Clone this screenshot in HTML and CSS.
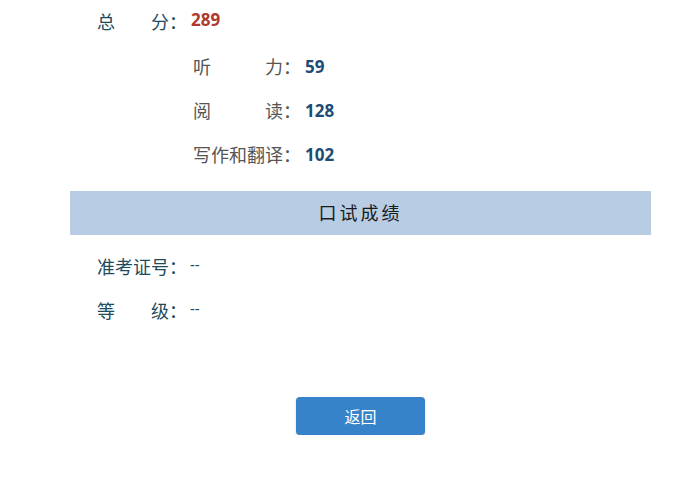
FILE: index.html
```html
<!DOCTYPE html>
<html lang="zh-CN">
<head>
  <meta charset="UTF-8">
  <meta name="viewport" content="width=device-width, initial-scale=1.0">
  <title>成绩查询</title>
  <link rel="stylesheet" href="styles.css">
</head>
<body>

<div id="result">
  <div class="row total">
    <span class="label">总分</span><span class="colon">：</span>
    <span class="value red">289</span>
  </div>
  <div class="row sub">
    <span class="label">听力</span><span class="colon">：</span>
    <span class="value">59</span>
  </div>
  <div class="row sub">
    <span class="label">阅读</span><span class="colon">：</span>
    <span class="value">128</span>
  </div>
  <div class="row sub">
    <span class="label">写作和翻译</span><span class="colon">：</span>
    <span class="value">102</span>
  </div>

  <div class="banner">口试成绩</div>

  <div class="row">
    <span class="label">准考证号</span><span class="colon">：</span>
    <span class="value plain">--</span>
  </div>
  <div class="row">
    <span class="label">等级</span><span class="colon">：</span>
    <span class="value plain">--</span>
  </div>

  <div class="actions">
    <button id="backButton">返回</button>
  </div>
</div>

</body>
</html>
```

FILE: styles.css
```css
body {
  margin: 0;
  background-color: #fff;
  font-family: "Noto Sans", "Noto Sans CJK SC", sans-serif;
  color: #1e4b5c;
}
#result {
  width: 581px;
  margin-left: 70px;
}
.row {
  display: flex;
  align-items: center;
  height: 44px;
  padding-left: 27px;
  font-size: 18px;
  line-height: 24px;
}
.row.total {
  height: 40px;
  margin-top: 2px;
  margin-bottom: 3px;
}
.row.sub {
  padding-left: 123px;
  color: #555;
}
.label {
  display: inline-block;
  width: 4em;
  text-align: justify;
  text-align-last: justify;
}
.sub .label {
  width: 5em;
}
.colon {
  display: inline-block;
  width: 1em;
}
.value {
  margin-left: 4px;
  font-weight: bold;
  font-size: 17px;
  color: #1d4d74;
}
.value.red {
  color: #b0392b;
  position: relative;
  top: -2px;
}
.value.plain {
  font-weight: normal;
  color: #1e4b5c;
  font-size: 15px;
  margin-left: 3px;
  position: relative;
  top: -3px;
}
.banner {
  margin-top: 14px;
  height: 44px;
  line-height: 44px;
  background-color: #b8cce4;
  text-align: center;
  font-size: 18px;
  letter-spacing: 3px;
  color: #1a1a1a;
}
.banner + .row {
  margin-top: 10px;
}
.actions {
  display: flex;
  justify-content: center;
  margin-top: 64px;
}
#backButton {
  width: 129px;
  height: 38px;
  background-color: #3683c9;
  color: #fff;
  border: none;
  border-radius: 4px;
  font-family: "Noto Sans CJK SC", sans-serif;
  font-size: 16px;
  box-shadow: 0 1px 2px rgba(0, 0, 0, 0.2);
}
```
